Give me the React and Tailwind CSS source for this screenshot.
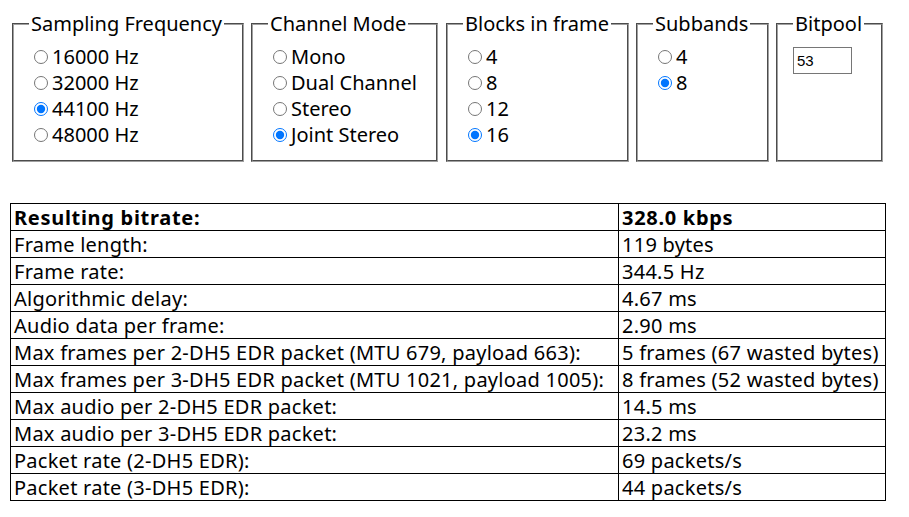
import React from "react";

const Radio = ({ name, label, checked }) => (
  <label className="flex items-center h-[26px]">
    <input
      type="radio"
      name={name}
      defaultChecked={checked}
      className="w-[14px] h-[14px] ml-[5px] mr-[4px] m-0 shrink-0"
    />
    <span>{label}</span>
  </label>
);

const Field = ({ legend, width, children }) => (
  <fieldset
    className={`min-w-0 shrink-0 border-2 [border-style:groove] border-[#a0a0a0] px-[15px] pt-[7px] pb-[12px] ${width}`}
  >
    <legend className="px-[2px] leading-[26px] whitespace-nowrap">{legend}</legend>
    {children}
  </fieldset>
);

const rows = [
  ["Resulting bitrate:", "328.0 kbps", true],
  ["Frame length:", "119 bytes"],
  ["Frame rate:", "344.5 Hz"],
  ["Algorithmic delay:", "4.67 ms"],
  ["Audio data per frame:", "2.90 ms"],
  ["Max frames per 2-DH5 EDR packet (MTU 679, payload 663):", "5 frames (67 wasted bytes)"],
  ["Max frames per 3-DH5 EDR packet (MTU 1021, payload 1005):", "8 frames (52 wasted bytes)"],
  ["Max audio per 2-DH5 EDR packet:", "14.5 ms"],
  ["Max audio per 3-DH5 EDR packet:", "23.2 ms"],
  ["Packet rate (2-DH5 EDR):", "69 packets/s"],
  ["Packet rate (3-DH5 EDR):", "44 packets/s"],
];

export default function App() {
  return (
    <div
      className="bg-white text-black text-[20px] w-[909px] h-[517px] pl-[10px] pt-[11px]"
      style={{ fontFamily: '"Noto Sans", "Open Sans", sans-serif' }}
    >
      <div className="flex gap-[7px] pl-[2px]">
        <Field legend="Sampling Frequency" width="w-[232px]">
          <Radio name="sf" label="16000 Hz" />
          <Radio name="sf" label="32000 Hz" />
          <Radio name="sf" label="44100 Hz" checked />
          <Radio name="sf" label="48000 Hz" />
        </Field>
        <Field legend="Channel Mode" width="w-[187px]">
          <Radio name="cm" label="Mono" />
          <Radio name="cm" label="Dual Channel" />
          <Radio name="cm" label="Stereo" />
          <Radio name="cm" label="Joint Stereo" checked />
        </Field>
        <Field legend="Blocks in frame" width="w-[183px] ml-[1px]">
          <Radio name="bf" label="4" />
          <Radio name="bf" label="8" />
          <Radio name="bf" label="12" />
          <Radio name="bf" label="16" checked />
        </Field>
        <Field legend="Subbands" width="w-[133px]">
          <Radio name="sb" label="4" />
          <Radio name="sb" label="8" checked />
        </Field>
        <Field legend="Bitpool" width="w-[107px]">
          <input
            type="text"
            defaultValue="53"
            className="mt-[2px] w-[59px] h-[27px] border border-[#767676] px-[3px] text-[15px] outline-none"
            style={{ fontFamily: '"Liberation Sans", Arial, sans-serif' }}
          />
        </Field>
      </div>
      <table className="mt-[41px] border-collapse border border-black w-[876px] table-fixed">
        <colgroup>
          <col className="w-[608px]" />
          <col />
        </colgroup>
        <tbody>
          {rows.map(([k, v, b], i) => (
            <tr
              key={i}
              className={`h-[27px] ${b ? "font-bold tracking-[0.7px]" : "tracking-[0.25px]"}`}
            >
              <td className="border border-black px-[3px] py-0 leading-[25px] whitespace-nowrap">{k}</td>
              <td className="border border-black px-[3px] py-0 leading-[25px] whitespace-nowrap">{v}</td>
            </tr>
          ))}
        </tbody>
      </table>
    </div>
  );
}
